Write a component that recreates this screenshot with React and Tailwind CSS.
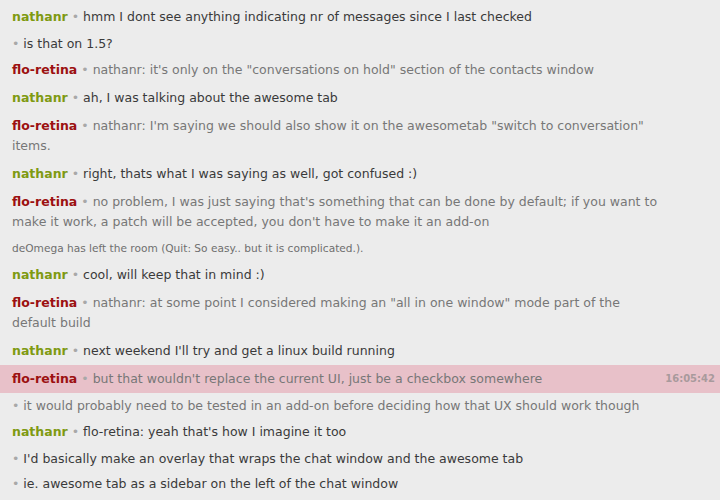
import React from 'react';

const NAME_COLORS = {
  nathanr: 'text-[#7f9a12]',
  'flo-retina': 'text-[#9c1111]',
};

const TEXT_COLORS = {
  nathanr: 'text-[#3a3a3a]',
  'flo-retina': 'text-[#777777]',
};

const messages = [
  { who: 'nathanr', name: true, text: 'hmm I dont see anything indicating nr of messages since I last checked' },
  { who: 'nathanr', text: 'is that on 1.5?' },
  { who: 'flo-retina', name: true, text: 'nathanr: it\'s only on the "conversations on hold" section of the contacts window' },
  { who: 'nathanr', name: true, text: 'ah, I was talking about the awesome tab' },
  { who: 'flo-retina', name: true, text: 'nathanr: I\'m saying we should also show it on the awesometab "switch to conversation" items.' },
  { who: 'nathanr', name: true, text: 'right, thats what I was saying as well, got confused :)' },
  { who: 'flo-retina', name: true, text: 'no problem, I was just saying that\'s something that can be done by default; if you want to make it work, a patch will be accepted, you don\'t have to make it an add-on' },
  { system: true, text: 'deOmega has left the room (Quit: So easy.. but it is complicated.).' },
  { who: 'nathanr', name: true, text: 'cool, will keep that in mind :)' },
  { who: 'flo-retina', name: true, text: 'nathanr: at some point I considered making an "all in one window" mode part of the default build' },
  { who: 'nathanr', name: true, text: 'next weekend I\'ll try and get a linux build running' },
  { who: 'flo-retina', name: true, highlight: true, time: '16:05:42', text: 'but that wouldn\'t replace the current UI, just be a checkbox somewhere' },
  { who: 'flo-retina', text: 'it would probably need to be tested in an add-on before deciding how that UX should work though' },
  { who: 'nathanr', name: true, text: 'flo-retina: yeah that\'s how I imagine it too' },
  { who: 'nathanr', text: 'I\'d basically make an overlay that wraps the chat window and the awesome tab' },
  { who: 'nathanr', text: 'ie. awesome tab as a sidebar on the left of the chat window' },
];

function Row({ m }) {
  if (m.system) {
    return (
      <div className="pl-3 py-[4px] text-[10.6px] leading-[17px] text-[#6f6f6f]">{m.text}</div>
    );
  }
  return (
    <div className={`flex items-start pl-3 pr-[5px] ${m.name ? 'py-[4px]' : 'py-[2.5px]'} ${m.highlight ? 'bg-[#e8c1c9]' : ''}`}>
      <div className={`w-[654px] text-[12.5px] leading-[20px] ${TEXT_COLORS[m.who]}`}>
        {m.name && <span className={`font-bold ${NAME_COLORS[m.who]}`}>{m.who}</span>}
        {m.name && ' '}
        <span className="text-[#a8a8a8]">•</span> {m.text}
      </div>
      {m.time && (
        <div className="ml-auto text-[10px] leading-[20px] font-bold text-[#a89a9c]">{m.time}</div>
      )}
    </div>
  );
}

export default function App() {
  return (
    <div className="w-[720px] h-[500px] overflow-hidden bg-[#ececec] pt-[3px]" style={{ fontFamily: '"DejaVu Sans", sans-serif' }}>
      {messages.map((m, i) => (
        <Row key={i} m={m} />
      ))}
    </div>
  );
}
